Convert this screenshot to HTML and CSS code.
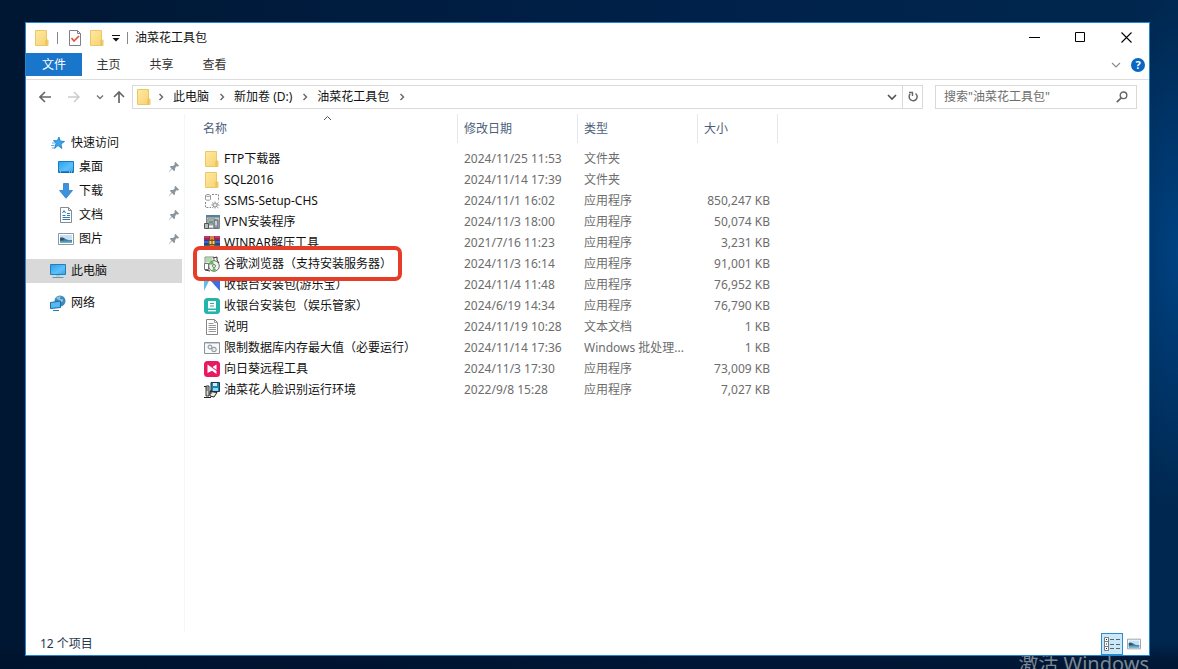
FILE: index.html
```html
<!DOCTYPE html>
<html lang="zh-CN">
<head>
<meta charset="utf-8">
<meta name="viewport" content="width=device-width, initial-scale=1">
<title>油菜花工具包</title>
<link rel="stylesheet" href="styles.css">
</head>
<body>
<svg class="defs" aria-hidden="true">
  <linearGradient id="gold" x1="0" y1="0" x2="1" y2="1"><stop offset="0" stop-color="#ffe9a2"/><stop offset="1" stop-color="#f7d26e"/></linearGradient>
  <linearGradient id="sky" x1="0" y1="0" x2="1" y2="1"><stop offset="0" stop-color="#2b9fee"/><stop offset=".6" stop-color="#5cc0fb"/><stop offset="1" stop-color="#2fa2ef"/></linearGradient>
  <symbol id="folder" viewBox="0 0 16 16"><path d="M1.500 .5h11v9.500h1.500v5.500h-12.500z" fill="url(#gold)" stroke="#ecc764"/><path d="M12 15V10h2v5z" fill="#f2cc66"/><path d="M12 10v5" stroke="#dfb54d" stroke-width=".8"/></symbol>
  <symbol id="pin" viewBox="0 0 12 12"><path d="M7.300 .8 11.200 4.700 9.900 5.400 8.600 5.300 7.100 6.900 7 9.400 5.900 10 4 8 1 11 .8 10.800 3.500 7.500 1.900 6 2.600 5 5.100 4.900 6.700 3.400 6.600 2z" fill="#8b979f"/></symbol>
  <symbol id="chev" viewBox="0 0 8 8"><path d="M2.500 1 5.500 4 2.500 7" fill="none" stroke="#666" stroke-width="1.400"/></symbol>
  <symbol id="picture" viewBox="0 0 16 16"><path d="M.5 2.500h15v11H.5z" fill="#fff" stroke="#8e989f"/><path d="M2 4h12v8H2z" fill="#c3e0f5"/><path d="M2 7c3-1 5 .5 7 1.500s3 .5 5 .5V12H2z" fill="#477fa6"/><path d="M2 7c2-1 4 0 5 1L5 9.500H2z" fill="#34526c"/><path d="M2 10.500h12V12H2z" fill="#69b0c8"/></symbol>
</svg>

<div class="window">
  <header class="titlebar">
    <svg class="icon"><use href="#folder"/></svg>
    <span class="bar"></span>
    <button class="quick" aria-label="属性"><svg class="icon" viewBox="0 0 16 16"><path d="M2.500 .5h8l3 3v12h-11z" fill="#fff" stroke="#7c8288"/><path d="M10.500 .5v3h3" fill="none" stroke="#7c8288"/><path d="M4.500 8 7 11 12 6" fill="none" stroke="#e2543c" stroke-width="1.700"/></svg></button>
    <button class="quick" aria-label="新建文件夹"><svg class="icon"><use href="#folder"/></svg></button>
    <button class="quick narrow" aria-label="自定义快速访问工具栏"><svg width="8" height="8" viewBox="0 0 8 8"><path d="M0 1.500h8" stroke="#111"/><path d="M.5 4h7L4 7.500z" fill="#111"/></svg></button>
    <span class="bar"></span>
    <h1 class="title">油菜花工具包</h1>
    <div class="controls">
      <button aria-label="最小化"><svg width="11" height="11"><path d="M0 5.500h11" stroke="#000"/></svg></button>
      <button aria-label="最大化"><svg width="11" height="11"><path d="M.5 .5h9v9h-9z" fill="none" stroke="#000"/></svg></button>
      <button aria-label="关闭"><svg width="11" height="11"><path d="M.5 .5 10.500 10.500M10.500 .5 .5 10.500" stroke="#000" stroke-width="1.100"/></svg></button>
    </div>
  </header>

  <nav class="ribbon" aria-label="功能区">
    <button class="tab active">文件</button>
    <button class="tab">主页</button>
    <button class="tab">共享</button>
    <button class="tab">查看</button>
    <span class="space"></span>
    <button class="expand" aria-label="展开功能区"><svg width="10" height="10"><path d="M1 3 5 7 9 3" fill="none" stroke="#8a8a8a" stroke-width="1.100"/></svg></button>
    <button class="help" aria-label="帮助">?</button>
  </nav>

  <div class="location">
    <button class="arrow" aria-label="后退"><svg width="12" height="12"><path d="M12 6H1M6 1 1 6 6 11" fill="none" stroke="#666" stroke-width="1.600"/></svg></button>
    <button class="arrow" aria-label="前进"><svg width="12" height="12"><path d="M0 6h11M6 1 11 6 6 11" fill="none" stroke="#ccc" stroke-width="1.500"/></svg></button>
    <button class="arrow recent" aria-label="最近位置"><svg width="8" height="8"><path d="M1 2.500 4 5.500 7 2.500" fill="none" stroke="#777" stroke-width="1.400"/></svg></button>
    <button class="arrow up" aria-label="向上"><svg width="12" height="12"><path d="M6 12V1M1 6 6 1 11 6" fill="none" stroke="#666" stroke-width="1.700"/></svg></button>
    <div class="address">
      <svg class="icon"><use href="#folder"/></svg>
      <svg class="chev"><use href="#chev"/></svg><a href="#pc">此电脑</a>
      <svg class="chev"><use href="#chev"/></svg><a href="#d">新加卷 (D:)</a>
      <svg class="chev"><use href="#chev"/></svg><a href="#kit">油菜花工具包</a>
      <svg class="chev"><use href="#chev"/></svg>
      <span class="space"></span>
      <button class="drop" aria-label="历史地址"><svg width="10" height="10"><path d="M1 3 5 7 9 3" fill="none" stroke="#555" stroke-width="1.700"/></svg></button>
      <button class="refresh" aria-label="刷新"><svg width="12" height="12"><path d="M8.500 2.500A4 4 0 1 1 3.200 3" fill="none" stroke="#666" stroke-width="1.500"/><path d="M2 1.500h3.500V5" fill="none" stroke="#666" stroke-width="1.400"/></svg></button>
    </div>
    <form class="search">
      <input type="search" aria-label="搜索" placeholder='搜索"油菜花工具包"'>
      <button type="button" aria-label="开始搜索"><svg width="12" height="12"><circle cx="7.500" cy="4.300" r="3.300" fill="none" stroke="#666" stroke-width="1.400"/><path d="M5.200 6.800.8 11.200" stroke="#666" stroke-width="1.700"/></svg></button>
    </form>
  </div>

  <div class="content">
    <nav class="tree" aria-label="导航窗格">
      <a href="#quick"><svg class="icon" viewBox="0 0 16 16"><path d="M9 2 10.200 6 14.500 6.500 11 9 11.800 13.500 8 10.500 4.500 13.500 6 8.500 3.500 5.500 7.200 5.800z" fill="#3ba5ec" stroke="#1779c4" stroke-width=".8"/><path d="M2 8h3M1 10.500h3.500M2 13h2" stroke="#5bb2ed"/></svg>快速访问</a>
      <a class="sub" href="#desktop"><svg class="icon" viewBox="0 0 16 16"><path d="M.5 2.500h15v11H.5z" fill="url(#sky)" stroke="#147bc6"/><path d="M1 13h14" stroke="#0e4e86"/><path d="M2 13h1m8 0h1m1 0h1" stroke="#d9efff"/></svg>桌面<svg class="pin"><use href="#pin"/></svg></a>
      <a class="sub" href="#downloads"><svg class="icon" viewBox="0 0 16 16"><path d="M5.500 .5h5v7h4L8 15.300 1.500 7.500h4z" fill="#3b93df" stroke="#2d7cc3" stroke-width=".8"/></svg>下载<svg class="pin"><use href="#pin"/></svg></a>
      <a class="sub" href="#docs"><svg class="icon" viewBox="0 0 16 16"><path d="M2.500 .5h8l3 3v12h-11z" fill="#fff" stroke="#848c93"/><path d="M10.500 .5v3h3" fill="none" stroke="#848c93"/><path d="M4.500 6 6 3.500 7.500 6M9 6.500h3M9 8.500h3M4.500 8.500h3M4.500 10.500h7.500M4.500 12.500h7.500" fill="none" stroke="#2f7bb7"/></svg>文档<svg class="pin"><use href="#pin"/></svg></a>
      <a class="sub" href="#pictures"><svg class="icon"><use href="#picture"/></svg>图片<svg class="pin"><use href="#pin"/></svg></a>
      <a class="group selected" href="#pc"><svg class="icon" viewBox="0 0 16 16"><path d="M.5 1.500h15v10H.5z" fill="url(#sky)" stroke="#287eac"/><path d="M6 12h4v1.500H6z" fill="#a9c9da"/><path d="M2.500 14.500h11" stroke="#5a9bc2"/></svg>此电脑</a>
      <a class="group" href="#network"><svg class="icon" viewBox="0 0 16 16"><circle cx="10" cy="6" r="5.500" fill="#3f88b8"/><path d="M6 3c2-2 3-1 4-2 2 2-1 2 0 3s3-1 3 1-1 2-2 2" fill="#8cc3dc"/><path d="M.5 7.500 10.500 6v6.500l-10 1z" fill="#56b8f2" stroke="#1b6ba4"/><path d="M3 15.500h6" stroke="#277cb0"/></svg>网络</a>
    </nav>

    <main class="files">
      <table>
        <colgroup><col class="c-name"><col class="c-mid"><col class="c-mid"><col class="c-size"><col></colgroup>
        <thead>
          <tr>
            <th class="name"><button>名称<svg class="sort" width="9" height="6"><path d="M1 5 4.500 1.500 8 5" fill="none" stroke="#555"/></svg></button></th>
            <th><button>修改日期</button></th><th><button>类型</button></th><th><button>大小</button></th><td></td>
          </tr>
        </thead>
        <tbody>
          <tr><td class="name"><div><svg class="icon"><use href="#folder"/></svg>FTP下载器</div></td><td>2024/11/25 11:53</td><td>文件夹</td><td class="size"></td></tr>
          <tr><td class="name"><div><svg class="icon"><use href="#folder"/></svg>SQL2016</div></td><td>2024/11/14 17:39</td><td>文件夹</td><td class="size"></td></tr>
          <tr><td class="name"><div><svg class="icon" viewBox="0 0 16 16"><path d="M1.500 2.500v4c1 1 4 1 5 0v-4M1.500 2.500c1-1.500 4-1.500 5 0-1 1.300-4 1.300-5 0" fill="#fff" stroke="#999"/><path d="M8 1.500h6.500V8M1.500 9v5.500H7" fill="none" stroke="#888" stroke-dasharray="2 1.200"/><path d="M8 9.500l6.500 5.500M14.500 9.500 8 15M11 8.500v7M7.500 12h8" stroke="#8c8c8c" stroke-width=".9"/><circle cx="11" cy="12" r="2" fill="#eee" stroke="#888" stroke-width=".8"/></svg>SSMS-Setup-CHS</div></td><td>2024/11/1 16:02</td><td>应用程序</td><td class="size">850,247 KB</td></tr>
          <tr><td class="name"><div><svg class="icon" viewBox="0 0 16 16"><path d="M2.500 1.500h13v13h-13z" fill="#c3c9cc" stroke="#78868e"/><path d="M2 1h14v2.500H2z" fill="#5b7f9b"/><path d="M4 5h7v5H4z" fill="#ddd5b3" stroke="#85816d"/><path d="M5 6.500h4v3H5z" fill="#5f95a3"/><path d="M10 6h4v8h-4z" fill="#9ba5aa" stroke="#5d6a70"/><path d="M11 8h2M11 10h2M5 12.500h4" stroke="#fff"/><path d="M.5 9.500h4v5h-4z" fill="#b9bcbc" stroke="#555"/></svg>VPN安装程序</div></td><td>2024/11/3 18:00</td><td>应用程序</td><td class="size">50,074 KB</td></tr>
          <tr><td class="name"><div><svg class="icon" viewBox="0 0 16 16"><path d="M0 1h16v4H0z" fill="#a3244f"/><path d="M0 5h16v5H0z" fill="#263f9d"/><path d="M0 10h16v5H0z" fill="#327547"/><path d="M0 2h5M11 2h5" stroke="#d95b7c"/><path d="M0 7h5M11 7h5" stroke="#6b8fdc"/><path d="M6 1h4v14H6z" fill="#ce8b45"/><path d="M5 5.500h6v4H5z" fill="#f1d270" stroke="#765023"/><path d="M8 4v6" stroke="#714818"/></svg>WINRAR解压工具</div></td><td>2021/7/16 11:23</td><td>应用程序</td><td class="size">3,231 KB</td></tr>
          <tr><td class="name marked"><div><svg class="icon" viewBox="0 0 16 16"><path d="M1 1h9v7H1z" fill="#e4e8e2" stroke="#899087"/><path d="M2 2h6v4H2z" fill="#acdca6"/><path d="M.5 7.500h4v6h-4zM5 9l3-3" fill="#fff" stroke="#777"/><circle cx="10" cy="10" r="5.300" fill="#eef4ec" stroke="#66725f"/><path d="M5.500 8.500A5 5 0 0 1 9 5.300l.8 3.200zM8 14.500l1.800-3 2.600 2.500a5 5 0 0 1-4.400.5" fill="#50bb51"/><circle cx="10" cy="10" r="1.500" fill="#fff" stroke="#777"/><path d="M9 2l4-1v3M13 4l2 3M1 14l5 1" stroke="#333" fill="none"/></svg>谷歌浏览器（支持安装服务器）</div></td><td>2024/11/3 16:14</td><td>应用程序</td><td class="size">91,001 KB</td></tr>
          <tr><td class="name"><div><svg class="icon" viewBox="0 0 16 16"><path d="M0 0h7L0 14z" fill="#5fbcf0"/><path d="M4 0h4l8 10v4L7 4.500z" fill="#438bef"/><path d="M0 14 7 4.500 9.500 7z" fill="#fff"/><path d="M9 0h7v14L8 4z" fill="#3b6fe4"/></svg>收银台安装包(游乐宝）</div></td><td>2024/11/4 11:48</td><td>应用程序</td><td class="size">76,952 KB</td></tr>
          <tr><td class="name"><div><svg class="icon" viewBox="0 0 16 16"><rect width="16" height="16" rx="3.500" fill="#23b5ac"/><path d="M4 3h8v7.500H4z" fill="#fff"/><path d="M6 5.500h4M6 8h4" stroke="#23b5ac"/><path d="M4 12.700h8" stroke="#fff" stroke-width="1.400"/></svg>收银台安装包（娱乐管家）</div></td><td>2024/6/19 14:34</td><td>应用程序</td><td class="size">76,790 KB</td></tr>
          <tr><td class="name"><div><svg class="icon" viewBox="0 0 16 16"><path d="M2.500 .5h8l3 3v12h-11z" fill="#fff" stroke="#888"/><path d="M10.500 .5v3h3M4.500 4.500h5M4.500 6.500H12M4.500 8.500H12M4.500 10.500H12M4.500 12.500H12" fill="none" stroke="#999"/></svg>说明</div></td><td>2024/11/19 10:28</td><td>文本文档</td><td class="size">1 KB</td></tr>
          <tr><td class="name"><div><svg class="icon" viewBox="0 0 16 16"><path d="M.5 2.500h15v11H.5z" fill="#f7f8f9" stroke="#8b9299"/><path d="M1 3.500h14" stroke="#cad0d5"/><circle cx="6" cy="7" r="2" fill="#ddd" stroke="#89949a"/><circle cx="10" cy="9.500" r="2.300" fill="#ddd" stroke="#89949a"/><path d="M6 6v2M10 8.500v2" stroke="#fff"/></svg>限制数据库内存最大值（必要运行）</div></td><td>2024/11/14 17:36</td><td>Windows 批处理...</td><td class="size">1 KB</td></tr>
          <tr><td class="name"><div><svg class="icon" viewBox="0 0 16 16"><rect width="16" height="16" rx="3.500" fill="#e91961"/><path d="M3.500 3.500 12.500 10v3L8 9.800 3.500 12z" fill="#fff"/><path d="M8.500 6 12.500 3.500V9z" fill="#fff"/></svg>向日葵远程工具</div></td><td>2024/11/3 17:30</td><td>应用程序</td><td class="size">73,009 KB</td></tr>
          <tr><td class="name"><div><svg class="icon" viewBox="0 0 16 16"><path d="M7 .5h8.500v9H7z" fill="#1f84b3" stroke="#17364d"/><path d="M9 1h4v3H9z" fill="#dbe9ed"/><path d="M9 6h5v3H9z" fill="#85dcec"/><path d="M2 4h3v10H2z" fill="#ddd9c8" stroke="#333"/><path d="M2 6h2M2 8h2" stroke="#555"/><path d="M6 9.500l7 1-3 4.500-4-1z" fill="#f2efe0" stroke="#222"/><path d="M0 15.500h7M7 8v4M0 4.500h2" stroke="#222"/></svg>油菜花人脸识别运行环境</div></td><td>2022/9/8 15:28</td><td>应用程序</td><td class="size">7,027 KB</td></tr>
        </tbody>
      </table>
    </main>
  </div>

  <footer class="status">
    <span class="count">12 个项目</span>
    <button class="view on" aria-label="详细信息"><svg width="16" height="14"><path d="M.5 .5h4v13h-4zM.5 4.500h4M.5 9.500h4" fill="#fff" stroke="#737e86"/><path d="M2 2.500h1M2 7h1M2 11.500h1" stroke="#222"/><path d="M6 2.500h10M6 7.500h10M6 11.500h10" stroke="#59656d" stroke-dasharray="4 2"/></svg></button>
    <button class="view" aria-label="大缩略图"><svg width="14" height="14"><use href="#picture"/></svg></button>
  </footer>
</div>
<div class="activate">激活 Windows</div>
</body>
</html>
```

FILE: styles.css
```css
*, *::before, *::after { box-sizing: border-box; }

body {
  margin: 0;
  height: 100vh;
  padding: 22px 28px 13px 25px;
  display: flex;
  position: relative;
  overflow: hidden;
  background:
    linear-gradient(to bottom, transparent 96%, rgba(0, 18, 44, .75) 99%),
    radial-gradient(ellipse 80px 260px at 100% 38%, #004282, transparent),
    linear-gradient(to right, #001733, #00214a 60%, #00274f);
  font: 12px/16px "Noto Sans", "Noto Sans CJK SC", sans-serif;
  color: #111;
}

button, input {
  margin: 0;
  padding: 0;
  border: 0;
  background: none;
  font: inherit;
  color: inherit;
}

a { color: inherit; text-decoration: none; }
svg { display: block; flex: none; }
.defs { position: absolute; width: 0; height: 0; }
.icon { width: 16px; height: 16px; }
.space { flex: 1; }

.window {
  flex: 1;
  min-width: 0;
  display: flex;
  flex-direction: column;
  position: relative;
  z-index: 1;
  background: #fff;
  border: 1px solid #2287cf;
}

.titlebar { display: flex; align-items: center; height: 30px; padding-left: 8px; }
.bar { width: 1px; height: 12px; margin: 0 6px 0 7px; background: #888; }
.quick { display: flex; justify-content: center; width: 22px; }
.quick.narrow { width: 16px; }
.quick.narrow + .bar { margin: 0 7px 0 3px; }
.title { margin: 0; font-size: 12px; line-height: 16px; font-weight: 400; flex: 1; }
.controls { display: flex; align-self: stretch; }
.controls button { width: 46px; display: grid; place-items: center; padding-bottom: 1px; }

.ribbon { display: flex; align-items: center; height: 27px; padding-bottom: 3px; border-bottom: 1px solid #dcdddf; }
.tab { width: 53px; height: 23px; padding-top: 1px; color: #333; }
.tab.active { width: 56px; background: #1976ca; color: #fff; }
.expand { margin-right: 10px; }
.help { width: 14px; height: 14px; margin-right: 4px; border-radius: 50%; background: #0967c4; color: #fff; font-size: 11px; line-height: 14px; font-weight: 700; }

.location { display: flex; align-items: center; height: 34px; padding: 0 12px; }
.arrow { width: 29px; display: flex; padding-left: 1px; }
.arrow.recent { width: 17px; padding-left: 0; }
.arrow.up { width: 19px; padding-left: 0; }
.address { flex: 1; display: flex; align-items: center; height: 24px; padding-left: 3px; border: 1px solid #d9d9d9; white-space: nowrap; }
.address .chev { width: 8px; height: 8px; margin: 0 8px 0 9px; }
.address .icon + .chev { margin-left: 5px; }
.drop { width: 20px; display: grid; place-items: center; }
.refresh { width: 20px; height: 22px; display: grid; place-items: center; border-left: 1px solid #d9d9d9; }
.search { display: flex; align-items: center; width: 202px; height: 24px; margin-left: 12px; padding: 0 8px; border: 1px solid #d9d9d9; }
.search input { flex: 1; min-width: 0; outline: 0; }
.search input::placeholder { color: #6d6d6d; opacity: 1; }

.content { flex: 1; min-height: 0; display: flex; }
.tree { width: 159px; padding: 17px 2px 0 0; border-right: 1px solid #f4f5f7; }
.tree a { display: flex; align-items: center; gap: 5px; height: 24px; padding: 0 2px 0 24px; }
.tree .sub { padding-left: 32px; }
.tree .group { margin-top: 8px; }
.tree .selected { background: #d9d9d9; }
.pin { width: 12px; height: 12px; margin-left: auto; }

.files { flex: 1; min-width: 0; overflow: hidden; }
table { width: 100%; table-layout: fixed; border-collapse: collapse; }
.c-name { width: 273px; }
.c-mid { width: 120px; }
.c-size { width: 80px; }
td, th { padding: 0; font-weight: 400; text-align: left; white-space: nowrap; }
th { padding-bottom: 5px; }
th button { width: 100%; height: 29px; padding-left: 6px; text-align: left; color: #4c607a; border-right: 1px solid #e3e8ee; position: relative; }
th.name button { padding-left: 18px; }
.sort { position: absolute; top: 1px; left: 138px; }
tbody tr { height: 21px; }
tbody td { padding-left: 6px; color: #6d6d6d; }
tbody td.name { padding-left: 19px; color: #111; }
.name div { display: flex; align-items: center; gap: 4px; }
tbody td.size { padding-right: 8px; text-align: right; }
.marked { position: relative; }
.marked::after { content: ""; position: absolute; top: -7px; left: 8px; width: 209px; height: 35px; border: 4px solid #e53d28; border-radius: 7px; }

.status { display: flex; align-items: center; height: 23px; padding: 0 4px 0 14px; color: #24384f; }
.count { flex: 1; }
.view { width: 22px; height: 22px; display: grid; place-items: center; }
.view.on { border: 1px solid #2b8fc9; background: #cbe8f9; }

.activate { position: absolute; right: 29px; bottom: -10px; font-size: 20px; line-height: 30px; color: #7d8793; white-space: nowrap; }
```
